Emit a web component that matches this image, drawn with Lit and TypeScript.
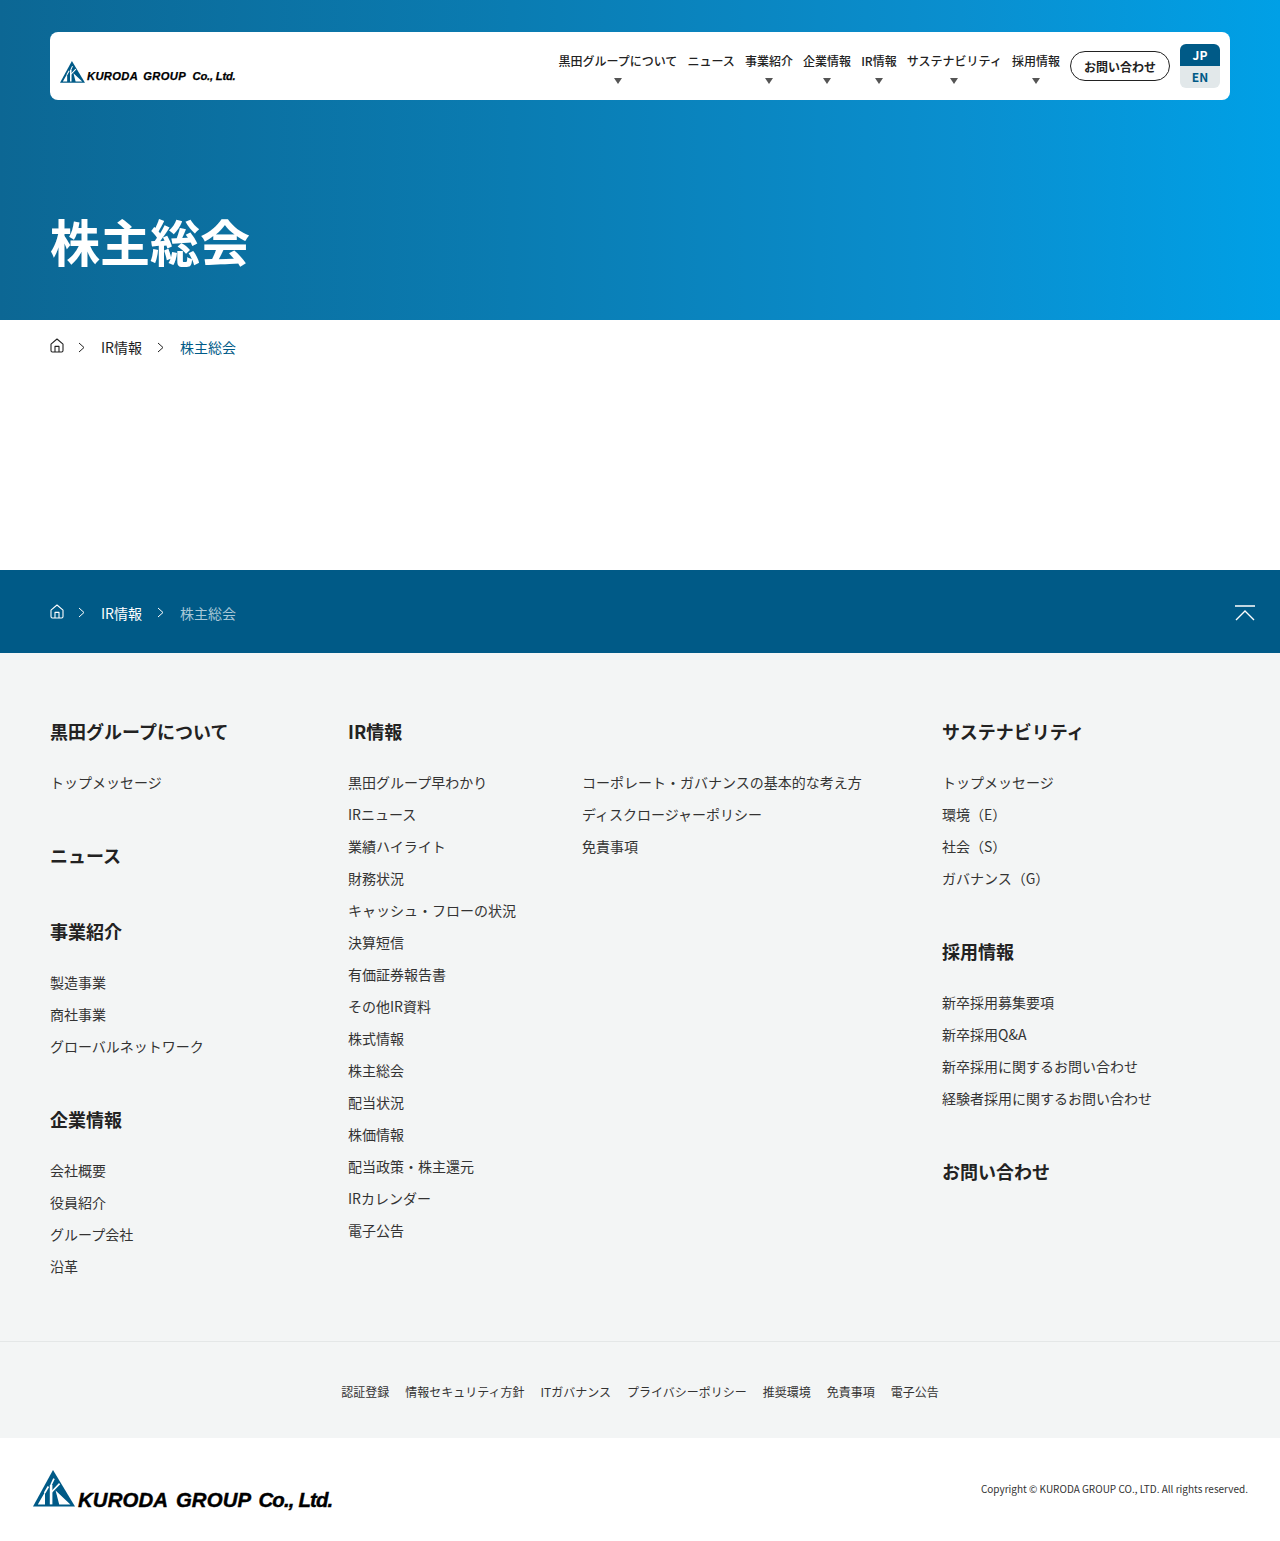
import { LitElement, html, css, svg } from 'lit';
import { customElement } from 'lit/decorators.js';

const navItems = [
  { label: '黒田グループについて', caret: true },
  { label: 'ニュース', caret: false },
  { label: '事業紹介', caret: true },
  { label: '企業情報', caret: true },
  { label: 'IR情報', caret: true },
  { label: 'サステナビリティ', caret: true },
  { label: '採用情報', caret: true },
];

const legal = ['認証登録', '情報セキュリティ方針', 'ITガバナンス', 'プライバシーポリシー', '推奨環境', '免責事項', '電子公告'];

const col1 = [
  { title: '黒田グループについて', links: ['トップメッセージ'] },
  { title: 'ニュース', links: [] },
  { title: '事業紹介', links: ['製造事業', '商社事業', 'グローバルネットワーク'] },
  { title: '企業情報', links: ['会社概要', '役員紹介', 'グループ会社', '沿革'] },
];

const irLinks = ['黒田グループ早わかり', 'IRニュース', '業績ハイライト', '財務状況', 'キャッシュ・フローの状況', '決算短信', '有価証券報告書', 'その他IR資料', '株式情報', '株主総会', '配当状況', '株価情報', '配当政策・株主還元', 'IRカレンダー', '電子公告'];
const irLinks2 = ['コーポレート・ガバナンスの基本的な考え方', 'ディスクロージャーポリシー', '免責事項'];

const col4 = [
  { title: 'サステナビリティ', links: ['トップメッセージ', '環境（E）', '社会（S）', 'ガバナンス（G）'] },
  { title: '採用情報', links: ['新卒採用募集要項', '新卒採用Q&A', '新卒採用に関するお問い合わせ', '経験者採用に関するお問い合わせ'] },
  { title: 'お問い合わせ', links: [] },
];

const homeIcon = svg`<svg class="home" viewBox="0 0 14 15" width="14" height="15" fill="none" stroke="currentColor" stroke-width="1.1" stroke-linejoin="round"><path d="M1 6.2 7 1l6 5.2V12.6a1.4 1.4 0 0 1-1.4 1.4H2.4A1.4 1.4 0 0 1 1 12.6z"/><path d="M5 14V8.4h4V14"/></svg>`;
const chevron = svg`<svg class="chev" viewBox="0 0 7 11" width="7" height="11" fill="none" stroke="currentColor" stroke-width="1"><path d="M1 1l5 4.5L1 10"/></svg>`;
// solid triangle with the white K cut out of it
const logoMark = svg`<svg class="mark" viewBox="0 0 42 37">
  <path fill="#005a87" d="M20 0 42 36.5H0z"/>
  <g fill="#fff">
    <path d="M4.8 34.4 12 22V34.4zM22.6 20.6 37.4 34.4H26.2z"/>
    <path d="M16.8 15h2.6v19.4h-2.6z"/>
  </g>
  <path fill="none" stroke="#fff" stroke-width="1.7" d="M18 15 21 8.6M18.6 22 26.6 13.6M11.6 23 15.4 16.5"/>
</svg>`;

@customElement('app-root')
export class AppRoot extends LitElement {
  static styles = css`
    :host {
      display: block;
      font-family: 'Noto Sans CJK JP', 'Noto Sans', sans-serif;
      color: #222;
      background: #fff;
    }
    a { color: inherit; text-decoration: none; }
    .hero {
      height: 320px;
      box-sizing: border-box;
      padding: 32px 50px 0;
      background: linear-gradient(90deg, #0c6794 0%, #0a7cb2 40%, #0a8fcf 75%, #00a0e6 100%);
    }
    .bar {
      height: 68px;
      background: #fff;
      border-radius: 8px;
      display: flex;
      align-items: center;
      justify-content: space-between;
      padding: 0 10px;
    }
    .logo {
      display: flex;
      align-items: flex-end;
      color: #000;
      font-family: 'Liberation Sans', sans-serif;
      font-weight: 700;
      font-style: italic;
      white-space: nowrap;
      -webkit-text-stroke: 0.25px #000;
    }
    .logo.small { margin-top: 12px; }
    .logo.small .mark { width: 25px; height: 22px; }
    .logo.small .word { font-size: 11.2px; line-height: 12px; margin: 0 0 1px 2px; letter-spacing: 0.35px; word-spacing: 2px; }
    .logo.small .co { margin-left: 1.5px; letter-spacing: -0.2px; word-spacing: 0; }
    .logo.big .mark { width: 42px; height: 37px; }
    .logo.big .word { font-size: 20.4px; line-height: 22px; margin: 0 0 -4px 3px; letter-spacing: 0.1px; word-spacing: 2.8px; -webkit-text-stroke: 0.4px #000; }
    .logo.big .co { margin-left: -0.5px; letter-spacing: -0.85px; word-spacing: 0; }
    nav { display: flex; align-items: center; gap: 10px; }
    .links { display: flex; gap: 10.1px; }
    .item {
      height: 68px;
      display: flex;
      flex-direction: column;
      align-items: center;
      font-size: 12px;
      font-weight: 500;
      line-height: 18px;
      padding-top: 20px;
      box-sizing: border-box;
      white-space: nowrap;
      color: #222;
    }
    .caret {
      width: 0;
      height: 0;
      margin-top: 8px;
      border-left: 4px solid transparent;
      border-right: 4px solid transparent;
      border-top: 6px solid #555;
    }
    .contact {
      width: 100px;
      height: 30px;
      box-sizing: border-box;
      border: 1px solid #222;
      border-radius: 15px;
      display: flex;
      align-items: center;
      justify-content: center;
      font-size: 12px;
      font-weight: 700;
    }
    .lang { width: 40px; border-radius: 6px; overflow: hidden; font-size: 12px; font-weight: 700; text-align: center; }
    .lang div { height: 22px; line-height: 22px; }
    .jp { background: #005a87; color: #fff; }
    .en { background: #e2e8ea; color: #005a87; }
    h1 {
      margin: 0;
      padding-top: 112px;
      font-size: 50px;
      line-height: 56px;
      font-weight: 700;
      color: #fff;
    }
    .crumbs {
      display: flex;
      align-items: center;
      height: 54px;
      box-sizing: border-box;
      font-size: 14px;
      color: #222;
    }
    .crumbs .home { margin-right: 14px; margin-top: -3px; }
    .crumbs .chev { margin-right: 16px; }
    .crumbs .txt { margin-right: 15px; }
    .crumbs .cur { color: #005a87; }
    .top { padding-left: 50px; }
    .main { height: 196px; }
    .band {
      height: 83px;
      background: #005a87;
      display: flex;
      align-items: center;
      justify-content: space-between;
      padding: 2px 25px 0 50px;
      box-sizing: border-box;
      color: #fff;
    }
    .band .crumbs { color: #fff; height: auto; }
    .band .crumbs .cur { color: #a9c8d8; }
    .pagetop { width: 20px; height: 16px; }
    .foot {
      background: #f3f5f5;
      padding: 65px 0 65px 50px;
      display: grid;
      grid-template-columns: 298px 234px 360px 1fr;
      border-bottom: 1px solid #e4e7e7;
    }
    .col { display: flex; flex-direction: column; gap: 50px; }
    .grp h3 {
      margin: 0;
      font-size: 18px;
      line-height: 26px;
      font-weight: 700;
      color: #222;
    }
    .grp ul {
      list-style: none;
      margin: 27px 0 -1px;
      padding: 0;
      display: flex;
      flex-direction: column;
      gap: 10px;
      font-size: 14px;
      line-height: 22px;
      color: #333;
    }
    .grp ul.offset { margin-top: 53px; }
    .legal {
      background: #f3f5f5;
      height: 96px;
      display: flex;
      align-items: center;
      justify-content: center;
      gap: 16px;
      font-size: 12px;
      color: #333;
      padding-top: 3px;
      box-sizing: border-box;
    }
    .end {
      height: 103px;
      display: flex;
      justify-content: space-between;
      align-items: center;
      padding: 0 32px 0 33px;
    }
    .end .big { margin-top: -2px; }
    .copy { font-size: 10px; color: #333; margin-top: -3px; }
  `;

  private group(g: { title: string; links: string[] }) {
    return html`<div class="grp">
      <h3>${g.title}</h3>
      ${g.links.length ? html`<ul>${g.links.map((l) => html`<li><a href="#">${l}</a></li>`)}</ul>` : ''}
    </div>`;
  }

  private crumbs() {
    return html`<div class="crumbs">
      ${homeIcon}${chevron}
      <a class="txt" href="#">IR情報</a>${chevron}
      <span class="cur">株主総会</span>
    </div>`;
  }

  private logo(size: string) {
    return html`<a class="logo ${size}" href="#">${logoMark}<span class="word">KURODA GROUP <span class="co">Co., Ltd.</span></span></a>`;
  }

  render() {
    return html`
      <header class="hero">
        <div class="bar">
          ${this.logo('small')}
          <nav>
            <div class="links">
              ${navItems.map((n) => html`<a class="item" href="#">${n.label}${n.caret ? html`<i class="caret"></i>` : ''}</a>`)}
            </div>
            <a class="contact" href="#">お問い合わせ</a>
            <div class="lang"><div class="jp">JP</div><div class="en">EN</div></div>
          </nav>
        </div>
        <h1>株主総会</h1>
      </header>
      <div class="top">${this.crumbs()}</div>
      <div class="main"></div>
      <div class="band">
        ${this.crumbs()}
        <svg class="pagetop" viewBox="0 0 20 16" fill="none" stroke="#fff" stroke-width="1.4"><path d="M0 1h20M1 15 10 6l9 9"/></svg>
      </div>
      <footer>
        <div class="foot">
          <div class="col">${col1.map((g) => this.group(g))}</div>
          <div class="col">${this.group({ title: 'IR情報', links: irLinks })}</div>
          <div class="col"><div class="grp"><ul class="offset">${irLinks2.map((l) => html`<li><a href="#">${l}</a></li>`)}</ul></div></div>
          <div class="col">${col4.map((g) => this.group(g))}</div>
        </div>
        <div class="legal">${legal.map((l) => html`<a href="#">${l}</a>`)}</div>
        <div class="end">
          ${this.logo('big')}
          <div class="copy">Copyright © KURODA GROUP CO., LTD. All rights reserved.</div>
        </div>
      </footer>
    `;
  }
}
